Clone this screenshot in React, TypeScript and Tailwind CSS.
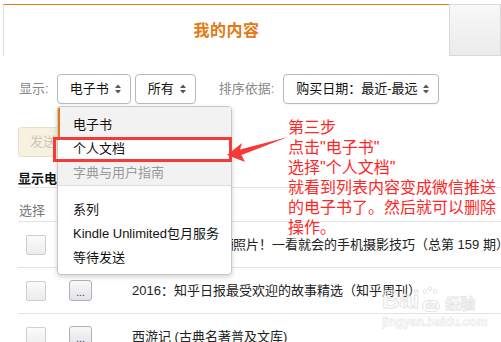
import React from "react";

const Arrows = () => (
  <svg width="6" height="10" viewBox="0 0 6 10" className="shrink-0">
    <polygon points="0,4 3,0.5 6,4" fill="#555" />
    <polygon points="0,6 3,9.5 6,6" fill="#555" />
  </svg>
);

const Select = ({ label, w }: { label: string; w: string }) => (
  <div
    className={`${w} h-[30px] flex items-center justify-between pl-[12px] pr-[9px] border border-[#b9b9b9] rounded-[4px] bg-white text-[#111] shadow-[0_1px_1px_rgba(0,0,0,0.04)]`}
  >
    <span className="whitespace-nowrap">{label}</span>
    <Arrows />
  </div>
);

const Row = ({ children }: { children: React.ReactNode }) => (
  <div className="flex items-center h-[46px] border-b border-[#e3e3e3] pl-[8px]">
    <div className="w-[20px] h-[20px] border border-[#cfcfcf] rounded-[2px] bg-gradient-to-b from-[#fbfbfb] to-[#ececec] shrink-0" />
    <div className="ml-[23px] w-[23px] h-[21px] border border-[#adb1ba] rounded-[3px] bg-gradient-to-b from-[#f8f8f9] to-[#e2e2e8] flex items-end justify-center text-[10px] leading-[14px] text-[#333] shrink-0">
      ...
    </div>
    <div className="ml-[40px] whitespace-nowrap text-[#222] text-[13px] flex items-center">{children}</div>
  </div>
);

export default function App() {
  return (
    <div className="relative w-[501px] h-[342px] overflow-hidden bg-white text-[13px] font-['Liberation_Sans','Noto_Sans_CJK_SC',sans-serif]">
      {/* top tabs */}
      <div className="flex pt-[4px] pl-[3px] h-[56px]">
        <div className="w-[446px] border-l border-t border-l-[#dedede] border-t-[#e47911] flex items-center justify-center">
          <span className="text-[16px] font-bold text-[#e47911] tracking-[0.5px]">我的内容</span>
        </div>
        <div className="flex-1 border border-[#d9d9d9] bg-gradient-to-b from-[#f8f8f8] to-[#ebebeb]" />
      </div>

      {/* controls */}
      <div className="flex items-center mt-[18px] ml-[19px] h-[30px]">
        <span className="text-[#888]">显示:</span>
        <div className="ml-[8px]">
          <Select label="电子书" w="w-[74px]" />
        </div>
        <div className="ml-[4px]">
          <Select label="所有" w="w-[61px]" />
        </div>
        <span className="ml-[23px] text-[#888]">排序依据:</span>
        <div className="ml-[9px]">
          <Select label="购买日期：最近-最远" w="w-[156px]" />
        </div>
      </div>

      {/* send button */}
      <div className="ml-[18px] mt-[23px]">
        <div className="w-[52px] h-[30px] rounded-[3px] border border-[#ebe0c6] bg-[#f7f1e2] text-[#cbc6bb] flex items-center pl-[11px] text-[13px]">
          发送
        </div>
      </div>

      {/* table */}
      <div className="ml-[18px] mt-[13px]">
        <div className="leading-[17px] font-bold text-[#111] border-b border-[#e3e3e3]">显示电子书</div>
        <div className="pt-[16px] pb-[3px] leading-[14px] text-[#777] border-b border-[#e3e3e3] pl-[1px]">选择</div>
        <Row>
          <span className="inline-block w-[101px] overflow-hidden">如何用手机拍出好</span>
          <span>照片！一看就会的手机摄影技巧（总第 159 期）</span>
        </Row>
        <Row>2016：知乎日报最受欢迎的故事精选（知乎周刊）</Row>
        <Row>西游记 (古典名著普及文库)</Row>
      </div>

      {/* dropdown */}
      <div className="absolute left-[57px] top-[106px] w-[175px] h-[169px] border border-[#c8c8c8] rounded-[4px] bg-white shadow-[0_2px_5px_rgba(0,0,0,0.18)] overflow-hidden text-[13px]">
        <div className="bg-[#f2f2f2] border-b border-[#dcdcdc]">
          <div className="h-[30px] pt-[6px] border-l-2 border-[#e47911] pl-[13px] leading-[24px] text-[#111]">电子书</div>
          <div className="h-[24px] bg-white pl-[15px] leading-[24px] text-[#111]">个人文档</div>
          <div className="h-[24px] pl-[15px] leading-[24px] text-[#9a9a9a]">字典与用户指南</div>
        </div>
        <div className="pt-[12px]">
          <div className="h-[24px] pl-[15px] leading-[24px] text-[#111]">系列</div>
          <div className="h-[24px] pl-[15px] leading-[24px] text-[#111] whitespace-nowrap">Kindle Unlimited包月服务</div>
          <div className="h-[24px] pl-[15px] leading-[24px] text-[#111]">等待发送</div>
        </div>
      </div>

      {/* red highlight box */}
      <div className="absolute left-[53px] top-[137px] w-[179px] h-[25px] border-[3px] border-[#f53a3a]" />

      {/* red arrow */}
      <svg className="absolute left-0 top-0" width="501" height="342" viewBox="0 0 501 342">
        <polygon
          points="227,155 242,143 240,149.5 288,137 241.5,155 245,162"
          fill="#f53a3a"
        />
      </svg>

      {/* annotation */}
      <div className="absolute left-[288px] top-[118px] text-[16px] leading-[20px] text-[#ff2626] whitespace-nowrap">
        <div>第三步</div>
        <div>点击"电子书"</div>
        <div>选择"个人文档"</div>
        <div>就看到列表内容变成微信推送</div>
        <div>的电子书了。然后就可以删除</div>
        <div>操作。</div>
      </div>

      {/* watermark */}
      <div className="absolute left-[382px] top-[285px] text-[#e8e8e8]">
        <div className="flex items-end h-[27px]">
          <span className="text-[24px] leading-[24px] font-bold text-transparent [-webkit-text-stroke:1px_#e4e4e4]">Bai</span>
          <div className="relative ml-[3px] w-[18px] h-[26px]">
            <div className="absolute left-[1px] top-[3px] w-[4px] h-[5px] rounded-full border border-[#e4e4e4]" />
            <div className="absolute left-[6px] top-0 w-[4px] h-[5px] rounded-full border border-[#e4e4e4]" />
            <div className="absolute left-[11px] top-[3px] w-[4px] h-[5px] rounded-full border border-[#e4e4e4]" />
            <div className="absolute left-0 top-[14px] w-[18px] h-[12px] rounded-[6px] border border-[#e4e4e4] text-[10px] leading-[10px] text-center text-transparent [-webkit-text-stroke:0.6px_#e0e0e0] font-bold">du</div>
          </div>
          <span className="ml-[5px] text-[15px] leading-[16px] font-bold text-transparent [-webkit-text-stroke:0.8px_#e4e4e4]">经验</span>
        </div>
        <div className="text-[12px] leading-[14px] mt-[3px] font-bold text-transparent [-webkit-text-stroke:0.6px_#e6e6e6]">jingyan.baidu.com</div>
      </div>
    </div>
  );
}
